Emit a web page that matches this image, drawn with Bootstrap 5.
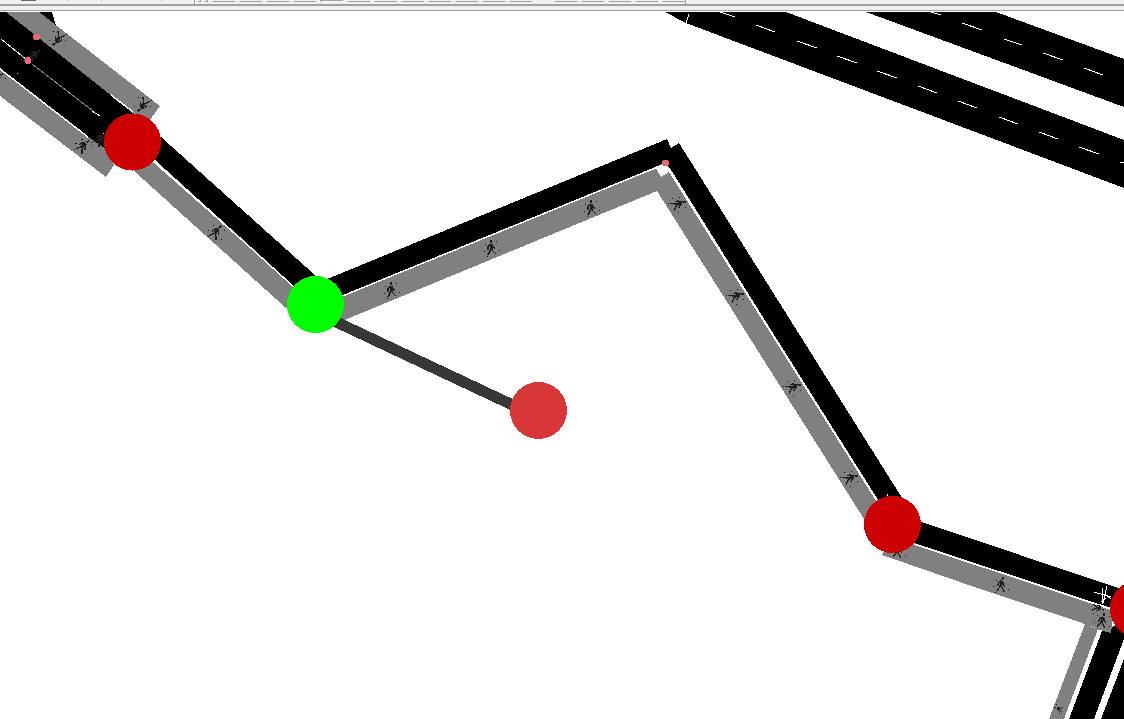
<!DOCTYPE html>
<html lang="en">
<head>
<meta charset="utf-8">
<meta name="viewport" content="width=device-width, initial-scale=1">
<title>Road network editor</title>
<link href="https://cdn.jsdelivr.net/npm/bootstrap@5.3.0/dist/css/bootstrap.min.css" rel="stylesheet">
<style>
body{font-family:"Liberation Sans",sans-serif;background:#fff}
.toolstrip{height:6px;background:#f0f0f0;border-bottom:2px solid #a0a0a0}
.toolstrip svg{height:4px;width:194px}
.tools{height:4px;padding-left:3px;gap:4px;border-left:1px solid #a0a0a0;border-right:1px solid #a0a0a0;box-shadow:inset 1px 0 #fff}
.grip{width:3px;height:2px;border-right:1px solid #a0a0a0;border-bottom:1px solid #a0a0a0}
.tool{width:23px;height:2px;padding:0;border:0;border-radius:0;background:#f0f0f0;border-left:1px solid #fff;border-bottom:1px solid #a0a0a0}
.tool.active{border:0;border-top:1px solid #a0a0a0;border-left:1px solid #a0a0a0;background:#f8f8f8}
.tool-gap{margin-left:18px}
.substrip{height:5px;background:#f0f0f0;border-bottom:1px solid #a0a0a0}
.network{min-height:0}
.network svg{shape-rendering:crispEdges}
.road{fill:#000}
.walk{fill:#808080}
.lane-line,.verge{fill:none;stroke:#fff;stroke-width:1}
.verge{stroke-width:1.5}
.junction{fill:#c00}
.point{fill:#e96675}
</style>
</head>
<body class="vh-100 overflow-hidden d-flex flex-column">
<header>
  <div class="toolstrip d-flex align-items-start" role="toolbar" aria-label="Editing tools">
    <svg aria-hidden="true"><path fill="#696969" d="M21 0h15v1H21z"/><path fill="#a0a0a0" d="M68 0h1v1h-1zM101 0h1v1h-1zM161 0h1v1h-1z"/></svg>
    <div class="tools d-flex align-items-start">
      <span class="grip"></span><span class="grip"></span>
      <button class="tool" aria-label="Edge mode"></button>
      <button class="tool" aria-label="Move mode"></button>
      <button class="tool" aria-label="Delete mode"></button>
      <button class="tool" aria-label="Inspect mode"></button>
      <button class="tool active" aria-label="Select mode"></button>
      <button class="tool" aria-label="Connection mode"></button>
      <button class="tool" aria-label="Prohibition mode"></button>
      <button class="tool" aria-label="Traffic light mode"></button>
      <button class="tool" aria-label="Additional mode"></button>
      <button class="tool" aria-label="Crossing mode"></button>
      <button class="tool" aria-label="Area mode"></button>
      <button class="tool" aria-label="Polygon mode"></button>
      <button class="tool tool-gap" aria-label="Show grid"></button>
      <button class="tool" aria-label="Show shapes"></button>
      <button class="tool" aria-label="Chain edges"></button>
      <button class="tool" aria-label="Two-way edges"></button>
      <button class="tool" aria-label="Show connections"></button>
    </div>
  </div>
  <div class="substrip"></div>
</header>
<main class="network flex-grow-1">
<svg class="d-block w-100 h-100" viewBox="0 11 1124 708" preserveAspectRatio="xMinYMin slice" role="img" aria-label="Road network with junctions and footpaths">
  <defs>
    <g id="walker">
      <path d="M-1-8h2v3h-2z" fill="#231f20"/>
      <path d="M0-4L0 1L-3 7M0 0L2 3L5 6M-1-4L-3-1L-3 2M1-3L4 1" fill="none" stroke="#231f20" stroke-width="1.4"/>
      <path d="M0-4L0 2" stroke="#231f20" stroke-width="3"/>
      <path d="M-7 3h1v1h-1zM-6-4h1v1h-1zM8 2h1v1h-1zM5-7h1v1h-1zM-4 8h1v1h-1z" fill="#111"/>
    </g>
  </defs>

  <!-- dual carriageway -->
  <path class="road" d="M665 12H786L1124 140V188L686 23zM866 12H996L1124 59V107z"/>
  <path class="lane-line" d="M689 14L686 23M720 12L735 17M756 25L775 32M797 41L817 48M837 56L857 63M877 71L897 78M918 86L937 93M958 101L977 108M999 117L1018 124M1039 132L1058 139M1079 147L1099 154M1120 162L1124 163M931 12L941 15M962 23L982 30M1004 39L1022 45M1043 53L1063 60M1084 68L1103 75"/>

  <!-- north-west road -->
  <path class="road" d="M0 12H6L134 112L120 158L100 147L0 68zM39 12H52L56 26z"/>
  <path class="walk" d="M6 12H39L160 106L150 120L132 112zM0 69L87 136L106 149L114 165L106 177L0 96z"/>
  <path class="road" d="M86 134L106 121V149z"/>
  <path class="verge" d="M0 69L88 137M111 95L133 112"/>
  <path class="lane-line" d="M1 39L27 60"/>
  <path d="M32 64L93 111" stroke="#888"/>
  <path class="lane-line" d="M92 111L100 116M17 73h1M103 133l2 2"/>

  <!-- diagonal road to the selected junction -->
  <path class="road" d="M161 137L316 276L296 290L155 161z"/>
  <path class="walk" d="M154 163L294 287L286 308L134 171L132 150z"/>
  <path class="verge" d="M155 161L294 287"/>

  <!-- bent road -->
  <path class="walk" d="M330 302L656 168L661 177L669 172L885 515L864 519L657 191L330 326z"/>
  <path class="road" d="M320 282L667 139L671 148L679 143L904 501L880 503L669 168L665 163L330 301z"/>
  <path class="verge" d="M340 297L665 164M669 168L880 506"/>
  <path class="lane-line" d="M887 494v3"/>
  <path fill="#fff" d="M658 167L665 164L670 170L662 176z"/>

  <!-- south-east roads -->
  <path class="road" d="M1102 631L1124 622V639L1094 719H1069zM1124 659V719H1101z"/>
  <path class="walk" d="M1085 624L1098 629L1064 719H1049z"/>
  <path class="walk" d="M882 555L892 534L960 560L1099 605L1114 613L1110 633L1085 624L960 582z"/>
  <path class="road" d="M910 518L1124 590V612L1099 604L905 540z"/>
  <path class="walk" d="M1096 606L1114 610L1111 633L1096 629z"/>
  <path class="verge" d="M914 544L1110 609"/>
  <path class="lane-line" d="M1094 592L1111 597M1107 586L1103 603M1102 588L1102 604M1101 602L1106 598M1105 594L1111 599"/>

  <!-- footpath symbols -->
  <use href="#walker" transform="translate(391 290)"/>
  <use href="#walker" transform="translate(491 248)"/>
  <use href="#walker" transform="translate(591 208)"/>
  <use href="#walker" transform="translate(216 232) rotate(38)"/>
  <use href="#walker" transform="translate(678 204) rotate(72)"/>
  <use href="#walker" transform="translate(736 296) rotate(72)"/>
  <use href="#walker" transform="translate(793 387) rotate(72)"/>
  <use href="#walker" transform="translate(850 478) rotate(72)"/>
  <use href="#walker" transform="translate(898 551) rotate(18)"/>
  <use href="#walker" transform="translate(1001 585) rotate(14)"/>
  <use href="#walker" transform="translate(1102 621) rotate(18)"/>
  <use href="#walker" transform="translate(1098 608) rotate(110) scale(.8)"/>
  <use href="#walker" transform="translate(1059 709) rotate(290) scale(.6)"/>
  <use href="#walker" transform="translate(58 39) rotate(220)"/>
  <use href="#walker" transform="translate(143 105) rotate(220)"/>
  <use href="#walker" transform="translate(83 146) rotate(48)"/>
  <use href="#walker" transform="translate(34 55) rotate(52)"/>
  <use href="#walker" transform="translate(100 139) rotate(48)"/>
  <use href="#walker" transform="translate(-3 79) rotate(48)"/>

  <!-- edge being drawn -->
  <path d="M315 312L538 417" stroke="#373737" stroke-width="11"/>

  <circle class="point" cx="36.5" cy="37" r="3.5"/>
  <circle class="point" cx="28" cy="60.5" r="3.5"/>
  <circle class="point" cx="665.5" cy="163" r="3.5"/>
  <circle class="junction" cx="132.5" cy="142" r="28.5"/>
  <circle class="junction" cx="892.5" cy="524.5" r="28.5"/>
  <circle class="junction" cx="1138.5" cy="609" r="28.5"/>
  <circle cx="315.5" cy="304.5" r="28.5" fill="#0f0"/>
  <circle cx="538.5" cy="410.5" r="28.5" fill="#d73737"/>
</svg>
</main>
<script src="https://cdn.jsdelivr.net/npm/bootstrap@5.3.0/dist/js/bootstrap.bundle.min.js"></script>
</body>
</html>
